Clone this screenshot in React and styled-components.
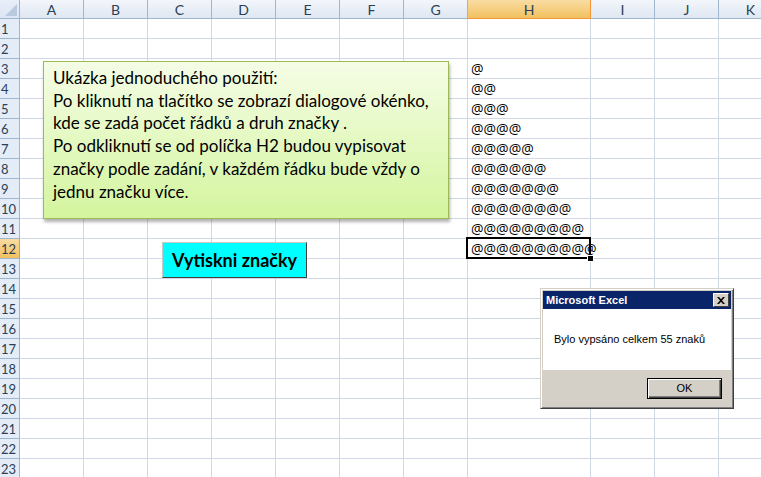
import React from "react";
import styled, { createGlobalStyle, css } from "styled-components";

const columns = ["A", "B", "C", "D", "E", "F", "G", "H", "I", "J", "K"];
const rowCount = 23;
const selectedCol = "H";
const selectedRow = 12;

function cellText(col, row) {
  if (col === "H" && row >= 3 && row <= 12) return "@".repeat(row - 2);
  return "";
}

export default function App() {
  const rows = Array.from({ length: rowCount }, (_, i) => i + 1);
  return (
    <>
      <GlobalStyle />
      <Sheet>
        <Corner />
        {columns.map((col) => (
          <ColHeader key={col} $selected={col === selectedCol}>
            {col}
          </ColHeader>
        ))}
        {rows.map((row) => (
          <React.Fragment key={row}>
            <RowHeader $selected={row === selectedRow}>{row}</RowHeader>
            {columns.map((col) => (
              <Cell
                key={col + row}
                $active={col === selectedCol && row === selectedRow}
              >
                {cellText(col, row)}
              </Cell>
            ))}
          </React.Fragment>
        ))}

        <Note>
          Ukázka jednoduchého použití:
          <br />
          Po kliknutí na tlačítko se zobrazí dialogové okénko,
          <br />
          kde se zadá počet řádků a druh značky .
          <br />
          Po odkliknutí se od políčka H2 budou vypisovat
          <br />
          značky podle zadání, v každém řádku bude vždy o
          <br />
          jednu značku více.
        </Note>

        <PrintButton>Vytiskni značky</PrintButton>

        <Dialog>
          <TitleBar>
            <span>Microsoft Excel</span>
            <CloseButton>
              <svg width="8" height="7" viewBox="0 0 8 7">
                <path
                  d="M0 0h2l2 2.2L6 0h2L5 3.5 8 7H6L4 4.8 2 7H0l3-3.5z"
                  fill="#000"
                />
              </svg>
            </CloseButton>
          </TitleBar>
          <DialogBody>Bylo vypsáno celkem 55 znaků</DialogBody>
          <DialogFooter>
            <OkButton>OK</OkButton>
          </DialogFooter>
        </Dialog>
      </Sheet>
    </>
  );
}

const GlobalStyle = createGlobalStyle`
  html, body {
    margin: 0;
    padding: 0;
    background: #ffffff;
    overflow: hidden;
  }
`;

const Sheet = styled.div`
  position: relative;
  display: grid;
  grid-template-columns: 20px repeat(7, 64px) 123px repeat(3, 64px);
  grid-template-rows: 19px repeat(${rowCount}, 20px);
  width: 761px;
  height: 477px;
  overflow: hidden;
  background: #ffffff;
  font-family: Lato, "Open Sans", sans-serif;
`;

const headerBase = css`
  box-sizing: border-box;
  display: flex;
  align-items: center;
  justify-content: center;
  font-size: 14px;
  color: #2b4055;
  border-right: 1px solid #9eb6ce;
  border-bottom: 1px solid #9eb6ce;
`;

const Corner = styled.div`
  ${headerBase};
  position: relative;
  background: linear-gradient(#e9eff8, #dce6f4);
  &::after {
    content: "";
    position: absolute;
    right: 2px;
    bottom: 2px;
    border-left: 12px solid transparent;
    border-bottom: 12px solid #b9cae0;
  }
`;

const ColHeader = styled.div`
  ${headerBase};
  background: ${(p) =>
    p.$selected
      ? "linear-gradient(#f9dca3, #f1c15f)"
      : "linear-gradient(#f3f6fb, #dfe7f2)"};
  border-bottom-color: ${(p) => (p.$selected ? "#f29536" : "#9eb6ce")};
  border-right-color: ${(p) => (p.$selected ? "#f29536" : "#9eb6ce")};
`;

const RowHeader = styled.div`
  ${headerBase};
  justify-content: flex-start;
  padding-left: 1px;
  font-size: 13px;
  background: ${(p) =>
    p.$selected ? "linear-gradient(#f9dca3, #f1c15f)" : "#e4ecf7"};
  border-right-color: ${(p) => (p.$selected ? "#f29536" : "#9eb6ce")};
`;

const Cell = styled.div`
  box-sizing: border-box;
  position: relative;
  border-right: 1px solid #d0d7e5;
  border-bottom: 1px solid #d0d7e5;
  padding-left: 3px;
  font-family: "Open Sans", sans-serif;
  font-size: 14px;
  line-height: 19px;
  color: #000000;
  white-space: nowrap;
  overflow: visible;
  ${(p) =>
    p.$active &&
    css`
      z-index: 2;
      &::after {
        content: "";
        position: absolute;
        top: -2px;
        left: -2px;
        right: -1px;
        bottom: -1px;
        border: 2px solid #000000;
      }
      &::before {
        content: "";
        position: absolute;
        right: -4px;
        bottom: -4px;
        width: 5px;
        height: 5px;
        background: #000000;
        border: 1px solid #ffffff;
        z-index: 3;
      }
    `}
`;

const Note = styled.div`
  position: absolute;
  left: 43px;
  top: 61px;
  width: 406px;
  height: 158px;
  box-sizing: border-box;
  padding: 5px 9px;
  border: 1px solid #9bbb59;
  background: linear-gradient(#f5fde6, #d4f59e);
  box-shadow: 1px 3px 3px rgba(0, 0, 0, 0.3);
  font-family: Lato, "Open Sans", sans-serif;
  font-size: 17px;
  line-height: 22.7px;
  color: #000000;
  white-space: nowrap;
  z-index: 4;
`;

const PrintButton = styled.div`
  position: absolute;
  left: 162px;
  top: 242px;
  width: 145px;
  height: 36px;
  box-sizing: border-box;
  display: flex;
  align-items: center;
  justify-content: center;
  background: #00ffff;
  border: 1px solid;
  border-color: #c8c8c8 #404040 #404040 #c8c8c8;
  font-family: Lato, "Open Sans", sans-serif;
  font-weight: 700;
  font-size: 18px;
  color: #000000;
  z-index: 4;
`;

const Dialog = styled.div`
  position: absolute;
  left: 540px;
  top: 288px;
  width: 194px;
  height: 121px;
  box-sizing: border-box;
  display: flex;
  flex-direction: column;
  padding: 2px;
  background: #d4d0c8;
  border: 1px solid;
  border-color: #d4d0c8 #404040 #404040 #d4d0c8;
  box-shadow: inset 1px 1px 0 #ffffff, inset -1px -1px 0 #808080;
  font-family: "Liberation Sans", Arial, sans-serif;
  font-size: 11px;
  z-index: 5;
`;

const TitleBar = styled.div`
  height: 18px;
  display: flex;
  align-items: center;
  justify-content: space-between;
  padding: 0 2px 0 3px;
  background: #0a246a;
  color: #ffffff;
  font-weight: 700;
  font-size: 11px;
`;

const CloseButton = styled.div`
  width: 16px;
  height: 14px;
  box-sizing: border-box;
  display: flex;
  align-items: center;
  justify-content: center;
  background: #d4d0c8;
  border: 1px solid;
  border-color: #ffffff #404040 #404040 #ffffff;
`;

const DialogBody = styled.div`
  height: 61px;
  display: flex;
  align-items: center;
  padding-left: 11px;
  padding-bottom: 2px;
  box-sizing: border-box;
  background: #ffffff;
  color: #000000;
`;

const DialogFooter = styled.div`
  flex: 1;
  display: flex;
  align-items: center;
  justify-content: flex-end;
  padding-right: 9px;
`;

const OkButton = styled.div`
  width: 75px;
  height: 21px;
  box-sizing: border-box;
  display: flex;
  align-items: center;
  justify-content: center;
  border: 1px solid #000000;
  background: #d4d0c8;
  box-shadow: inset 1px 1px 0 #ffffff, inset -1px -1px 0 #404040,
    inset -2px -2px 0 #808080;
  color: #000000;
  font-size: 11px;
`;
